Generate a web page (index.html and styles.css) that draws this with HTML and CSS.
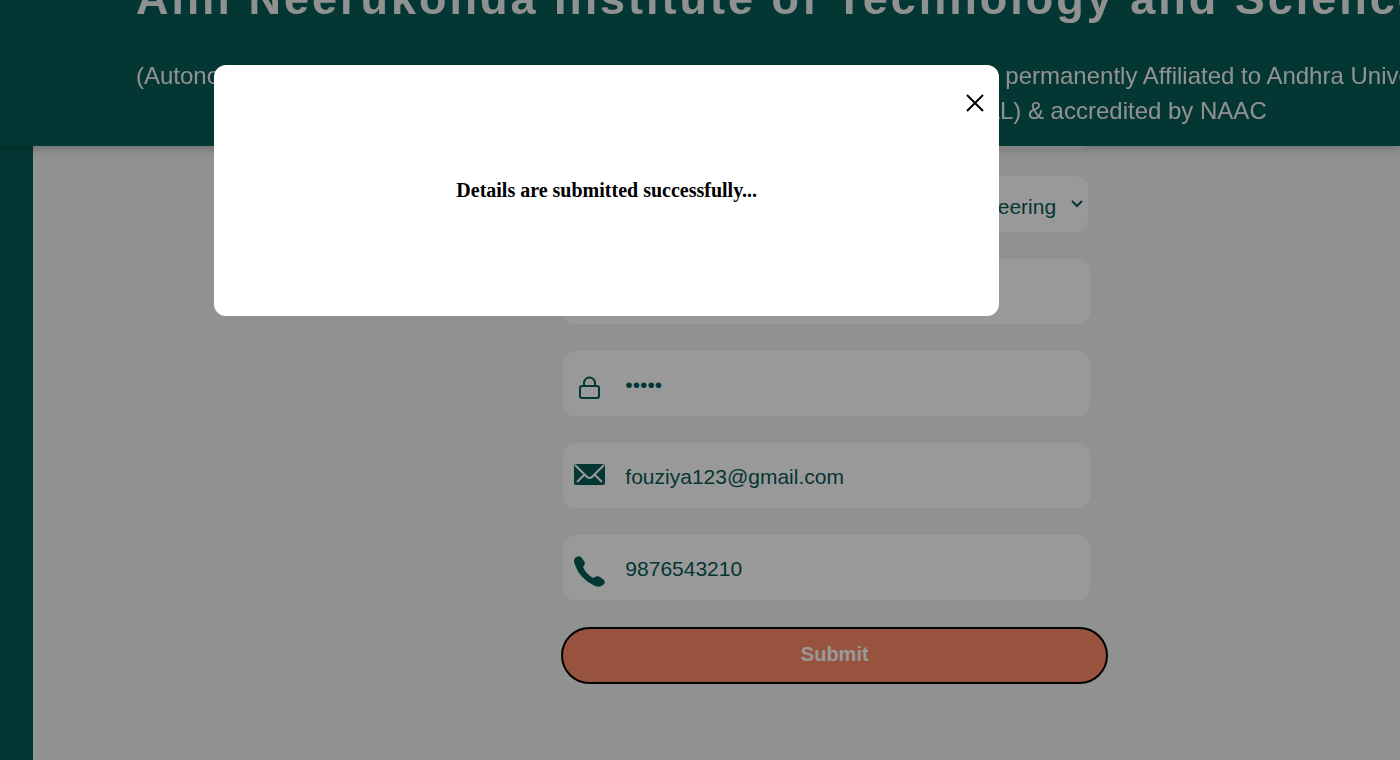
FILE: index.html
```html
<!DOCTYPE html>
<html lang="en">
<head>
<meta charset="utf-8">
<title>Registration</title>
<link rel="stylesheet" href="styles.css">
</head>
<body>
<header class="header">
  <h1 class="title">Anil Neerukonda Institute of Technology and Sciences</h1>
  <div class="about">
    <p>(Autonomous status granted by UGC and Andhra University, Approved by AICTE, permanently Affiliated to Andhra University</p>
    <p>Accredited by NBA (ECE, EEE, CSE, IT, ME, Civil, &amp; CHEMICAL) &amp; accredited by NAAC</p>
  </div>
</header>
<main class="page">
  <form class="form">
    <div class="field"><input type="text" aria-label="Name"></div>
    <div class="field branch">
      <select aria-label="Branch"><option>Electronics and Communication Engineering</option></select>
      <svg class="chevron" viewBox="0 0 12 8" aria-hidden="true"><path d="M1 1l5 5 5-5"/></svg>
    </div>
    <div class="field"><input type="text" aria-label="User name"></div>
    <div class="field">
      <svg class="icon" viewBox="0 0 31 38" aria-hidden="true"><g fill="none" stroke="currentColor" stroke-width="2"><rect x="6" y="21" width="19" height="12" rx="2"/><path d="M10 21V18a5.500 5.500 0 0 1 11 0v3"/></g></svg>
      <input type="password" value="abcde" aria-label="Password">
    </div>
    <div class="field">
      <svg class="icon" viewBox="0 0 31 38" aria-hidden="true"><rect y="7" width="31" height="21" rx="2" fill="currentColor"/><path d="M1 8l11 11q3.500 4 7 0L30 8M3 25l8-8M28 25l-8-8" fill="none" stroke="#fff" stroke-width="2"/></svg>
      <input type="email" value="fouziya123@gmail.com" aria-label="Email">
    </div>
    <div class="field">
      <svg class="icon" viewBox="0 0 31 38" aria-hidden="true"><path fill="currentColor" d="M1 9Q4 6 7 8L10 12Q12 15 9 18Q12 25 19 29Q23 26 26 28L30 31Q32 34 29 36Q26 39 21 37Q6 30 1 16Q-1 11 1 9Z"/></svg>
      <input type="tel" value="9876543210" aria-label="Phone">
    </div>
    <button class="submit" type="submit">Submit</button>
  </form>
</main>
<div class="overlay">
  <section class="modal" role="dialog" aria-modal="true" aria-labelledby="message">
    <button class="close" type="button" aria-label="Close"><svg viewBox="0 0 18 18" aria-hidden="true"><path d="M1 1l16 16M17 1L1 17"/></svg></button>
    <h2 class="message" id="message">Details are submitted successfully...</h2>
  </section>
</div>
</body>
</html>
```
FILE: styles.css
```css
* { box-sizing: border-box; }
body {
  margin: 0;
  height: 100vh;
  overflow: hidden;
  font-family: "Liberation Sans", Arial, sans-serif;
  color: #085a55;
}
.header {
  position: fixed;
  inset: 0 0 auto;
  height: 146px;
  padding: 0 0 18px 136px;
  display: flex;
  flex-direction: column;
  justify-content: flex-end;
  gap: 35px;
  overflow: hidden;
  white-space: nowrap;
  background: #085a55;
  color: #eef3f0;
  box-shadow: 0 4px 8px rgba(0, 0, 0, .2);
  z-index: 1;
}
.title {
  margin: 0;
  font-size: 45px;
  line-height: 48px;
  letter-spacing: 3px;
}
.about {
  width: max-content;
  font-size: 24px;
  line-height: 35px;
  text-align: center;
}
.about p { margin: 0; }
.page {
  min-height: 100vh;
  padding-top: 84px;
  border-left: 33px solid #085a55;
  background: #eef3f0;
}
.form {
  width: 40%;
  margin-left: 38.65%;
}
.field {
  display: flex;
  align-items: center;
  gap: 20px;
  height: 65px;
  margin: 0 18px 27px 2px;
  padding-left: 11px;
  border-radius: 12px;
  background: #fff;
}
.icon {
  flex: none;
  width: 31px;
  height: 38px;
}
.field input,
.field select {
  flex: 1;
  min-width: 0;
  height: 100%;
  padding: 3px 0 0;
  border: 0;
  outline: 0;
  background: none;
  font: 21px "Liberation Sans", Arial, sans-serif;
  color: inherit;
}
.field.branch {
  height: 56px;
  margin-right: 20px;
  padding-right: 5px;
  gap: 15px;
}
.field select {
  appearance: none;
  padding-top: 4px;
  text-align-last: right;
}
.chevron {
  width: 12px;
  height: 8px;
  fill: none;
  stroke: currentColor;
  stroke-width: 2;
}
.submit {
  display: block;
  width: 100%;
  height: 57px;
  padding-bottom: 4px;
  border: 2px solid #000;
  border-radius: 29px;
  background: #fe8b6a;
  color: #fff;
  font: bold 20px "Liberation Sans", Arial, sans-serif;
}
.overlay {
  position: fixed;
  inset: 0;
  z-index: 2;
  padding: 65px 0 0 15.3%;
  background: rgba(0, 0, 0, .4);
}
.modal {
  position: relative;
  display: flex;
  align-items: center;
  justify-content: center;
  width: 66.2%;
  min-height: 251px;
  border-radius: 12px;
  background: #fff;
}
.close {
  position: absolute;
  top: 24px;
  right: 10px;
  display: grid;
  place-items: center;
  width: 28px;
  height: 28px;
  padding: 0;
  border: 0;
  background: none;
}
.close svg {
  width: 18px;
  height: 18px;
  stroke: #000;
  stroke-width: 2;
}
.message {
  margin: 0;
  font: bold 20px "Liberation Serif", "Times New Roman", serif;
  color: #000;
}
```
